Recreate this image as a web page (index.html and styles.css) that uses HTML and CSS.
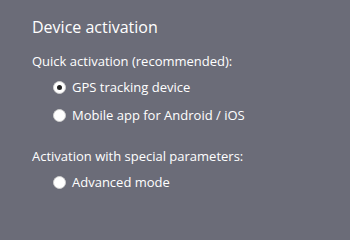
FILE: index.html
```html
<!DOCTYPE html>
<html>
<head>
<meta charset="utf-8">
<link rel="stylesheet" href="styles.css">
</head>
<body>
<div class="panel">
  <h1 class="title">Device activation</h1>
  <div class="group">
    <div class="group-label">Quick activation (recommended):</div>
    <label class="option"><span class="radio checked"></span><span>GPS tracking device</span></label>
    <label class="option"><span class="radio"></span><span>Mobile app for Android / iOS</span></label>
  </div>
  <div class="group">
    <div class="group-label">Activation with special parameters:</div>
    <label class="option"><span class="radio"></span><span>Advanced mode</span></label>
  </div>
</div>
</body>
</html>
```
FILE: styles.css
```css
html, body {
  margin: 0;
  padding: 0;
  background: #6b6c78;
}
body {
  width: 350px;
  height: 220px;
  overflow: hidden;
  font-family: "Open Sans", "Liberation Sans", sans-serif;
  color: #ffffff;
}
.panel {
  padding: 16px 0 0 32px;
}
.title {
  margin: 0;
  font-size: 16px;
  font-weight: 400;
  line-height: 22px;
}
.group {
  margin-top: 14px;
}
.group + .group {
  margin-top: 18px;
}
.group-label {
  font-size: 13px;
  line-height: 18px;
  margin-bottom: 3px;
}
.option {
  display: flex;
  align-items: center;
  gap: 6px;
  margin-left: 21px;
  height: 28px;
  font-size: 13px;
}
.radio {
  box-sizing: border-box;
  width: 13px;
  height: 13px;
  border-radius: 50%;
  background: #ffffff;
  border: 1px solid #d0d0d0;
  display: flex;
  align-items: center;
  justify-content: center;
}
.radio.checked::after {
  content: "";
  width: 5px;
  height: 5px;
  border-radius: 50%;
  background: #222222;
}
```
